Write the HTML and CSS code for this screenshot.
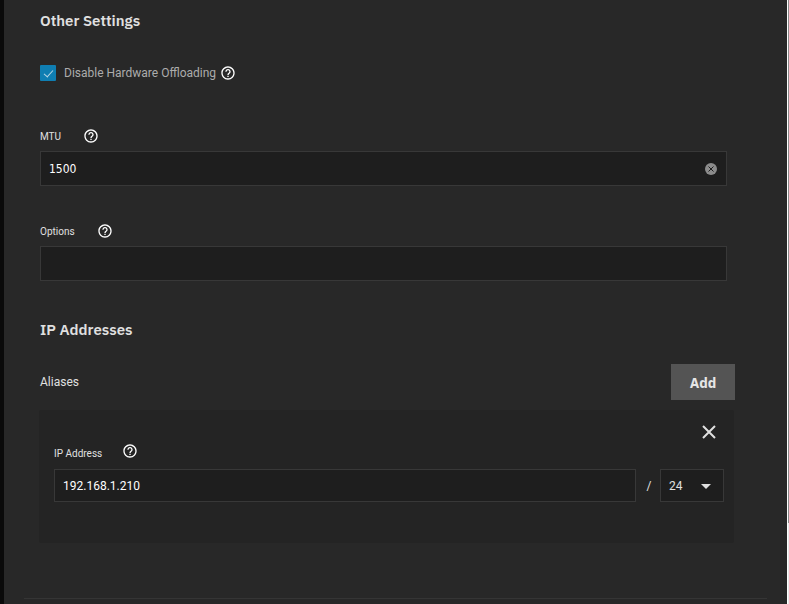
FILE: index.html
```html
<!DOCTYPE html>
<html lang="en">
<head>
  <meta charset="UTF-8">
  <meta name="viewport" content="width=device-width, initial-scale=1.0">
  <title>Interface Settings</title>
  <link rel="stylesheet" href="styles.css">
</head>
<body>
  <svg width="0" height="0" class="sprite" aria-hidden="true">
    <symbol id="help" viewBox="0 0 24 24">
      <path d="M11 18h2v-2h-2v2zm1-16C6.48 2 2 6.48 2 12s4.48 10 10 10 10-4.48 10-10S17.52 2 12 2zm0 18c-4.41 0-8-3.59-8-8s3.59-8 8-8 8 3.59 8 8-3.59 8-8 8zm0-14c-2.21 0-4 1.79-4 4h2c0-1.1.9-2 2-2s2 .9 2 2c0 2-3 1.75-3 5h2c0-2.25 3-2.5 3-5 0-2.21-1.79-4-4-4z"/>
    </symbol>
  </svg>

  <div class="page">
    <form class="panel">
      <section class="section">
        <h2>Other Settings</h2>

        <div class="check-row">
          <input type="checkbox" id="offload" checked>
          <label for="offload">Disable Hardware Offloading</label>
          <svg class="help"><use href="#help"/></svg>
        </div>

        <div class="field">
          <div class="field-label">
            <label for="mtu">MTU</label>
            <svg class="help"><use href="#help"/></svg>
          </div>
          <div class="input-wrap">
            <input type="text" id="mtu" class="mtu" value="1500">
            <button type="button" class="clear" aria-label="Clear">
              <svg viewBox="0 0 12 12"><circle cx="6" cy="6" r="6"/><path d="M3.5 3.5l5 5M8.5 3.5l-5 5"/></svg>
            </button>
          </div>
        </div>

        <div class="field">
          <div class="field-label">
            <label for="options">Options</label>
            <svg class="help"><use href="#help"/></svg>
          </div>
          <input type="text" id="options">
        </div>
      </section>

      <section class="section addresses">
        <h2>IP Addresses</h2>

        <div class="list-head">
          <span>Aliases</span>
          <button type="button" class="add">Add</button>
        </div>

        <div class="card">
          <div class="card-top">
            <button type="button" class="remove" aria-label="Remove">
              <svg viewBox="0 0 14 14"><path d="M1 1l12 12M13 1L1 13"/></svg>
            </button>
          </div>
          <div class="field-label">
            <label for="ip">IP Address</label>
            <svg class="help"><use href="#help"/></svg>
          </div>
          <div class="ip-row">
            <input type="text" id="ip" value="192.168.1.210">
            <span class="slash">/</span>
            <div class="select-wrap">
              <select aria-label="Netmask">
                <option>24</option>
                <option>16</option>
                <option>8</option>
              </select>
            </div>
          </div>
        </div>
      </section>

      <hr>
    </form>
    <div class="scroll"></div>
  </div>
</body>
</html>
```
FILE: styles.css
```css
* {
  box-sizing: border-box;
}

body {
  margin: 0;
  background-color: #0a0a0a;
  color: #e0e0e0;
  font-family: Roboto, sans-serif;
  font-size: 12px;
}

.sprite {
  position: absolute;
}

.page {
  display: flex;
  min-height: 100vh;
  padding-left: 4px;
}

.panel {
  flex: 1;
  padding: 11px 20px 4px;
  background-color: #282828;
}

.scroll {
  width: 2px;
  border-left: 1px solid #fff;
  background: linear-gradient(#8b8b8b 523px, #e8e8e8 523px);
}

.section {
  padding: 0 32px 0 16px;
}

.addresses {
  margin-top: 39px;
}

h2 {
  margin: 0;
  font-family: "IBM Plex Sans", "Noto Sans", sans-serif;
  font-size: 15px;
  font-weight: 600;
  line-height: 20px;
}

.help {
  width: 16px;
  height: 16px;
  fill: #fff;
}

/* checkbox */
.check-row {
  display: flex;
  align-items: center;
  height: 16px;
  margin-top: 34px;
  color: #acacac;
}

.check-row label {
  margin: 0 4px 0 8px;
}

input[type="checkbox"] {
  appearance: none;
  display: flex;
  justify-content: center;
  width: 16px;
  height: 16px;
  margin: 0;
  border-radius: 1px;
  background-color: #0f7eb2;
}

input[type="checkbox"]:checked::after {
  content: "";
  width: 4px;
  height: 8px;
  margin-top: 3px;
  border: solid #b5d5e4;
  border-width: 0 1px 1px 0;
  transform: rotate(42deg);
}

/* text fields */
.field {
  margin: 47px 8px 0 0;
}

.field + .field {
  margin-top: 37px;
}

.field-label {
  display: flex;
  align-items: center;
  gap: 22px;
  height: 16px;
  margin-bottom: 7px;
  font-size: 10px;
}

input[type="text"],
select {
  display: block;
  width: 100%;
  height: 35px;
  padding: 0 8px;
  border: 1px solid #383838;
  border-radius: 0;
  background-color: #1e1e1e;
  color: #fff;
  font-family: Roboto, sans-serif;
  font-size: 12px;
}

.input-wrap {
  position: relative;
}

input.mtu {
  padding-right: 32px;
  font-family: "DejaVu Sans Condensed", "DejaVu Sans", sans-serif;
}

.clear {
  position: absolute;
  top: 12px;
  right: 10px;
  width: 12px;
  height: 12px;
  padding: 0;
  border: none;
  background: none;
}

.clear svg {
  display: block;
  fill: #8c8c8c;
  stroke: #1e1e1e;
}

.clear circle {
  stroke: none;
}

/* aliases */
.list-head {
  display: flex;
  align-items: center;
  justify-content: space-between;
  margin: 24px 0 10px;
}

.add {
  width: 64px;
  height: 36px;
  padding-top: 3px;
  border: none;
  background-color: #545454;
  color: #e6e6e6;
  font-family: "IBM Plex Sans", "Noto Sans", sans-serif;
  font-size: 14px;
  font-weight: 700;
}

.card {
  margin: 0 1px 0 -1px;
  padding: 15px 10px 41px 15px;
  border-radius: 2px;
  background-color: #242424;
}

.card-top {
  display: flex;
  justify-content: flex-end;
  padding-right: 8px;
}

.remove {
  width: 14px;
  height: 14px;
  padding: 0;
  border: none;
  background: none;
}

.remove svg {
  display: block;
  stroke: #e0e0e0;
  stroke-width: 2;
}

.card .field-label {
  gap: 20px;
  margin: 4px 0 10px;
}

.card .field-label label {
  padding-top: 4px;
}

.ip-row {
  display: flex;
  align-items: center;
}

.ip-row input[type="text"],
.ip-row select {
  height: 33px;
}

.ip-row input[type="text"] {
  flex: 1;
}

.slash {
  width: 24px;
  padding-left: 2px;
  text-align: center;
}

.select-wrap {
  position: relative;
  width: 64px;
}

.select-wrap select {
  appearance: none;
  color: #e0e0e0;
}

.select-wrap::after {
  content: "";
  position: absolute;
  top: 15px;
  right: 13px;
  border: 5px solid transparent;
  border-top-color: #e0e0e0;
  border-bottom: none;
  pointer-events: none;
}

hr {
  height: 1px;
  margin: 55px 0 0;
  border: none;
  background-color: #353535;
}
```
